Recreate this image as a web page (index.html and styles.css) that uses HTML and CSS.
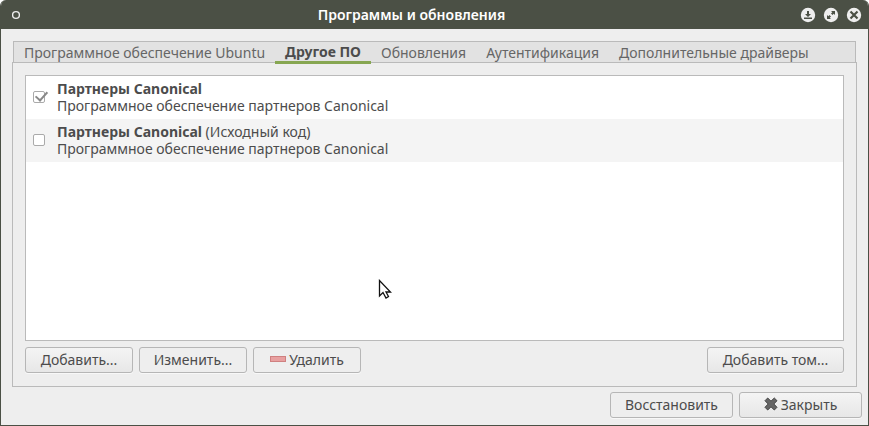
FILE: index.html
```html
<!DOCTYPE html>
<html lang="ru">
<head>
    <meta charset="UTF-8">
    <meta name="viewport" content="width=device-width, initial-scale=1.0">
    <title>Программы и обновления</title>
    <link rel="stylesheet" href="styles.css">
</head>
<body>
    <div class="window">
        <header class="titlebar">
            <button class="window-button" aria-label="Меню окна">
                <svg width="16" height="16" viewBox="0 0 16 16"><circle cx="9" cy="8" r="3.4" fill="none" stroke="#eeeeee" stroke-width="1.4"/></svg>
            </button>
            <h1>Программы и обновления</h1>
            <div class="window-controls">
                <button class="window-button" aria-label="Свернуть">
                    <svg width="16" height="16" viewBox="0 0 16 16">
                        <circle cx="8" cy="8" r="7.2" fill="#eeeeee"/>
                        <path d="M7 4h2v3h2L8 10 5 7h2zM4 10.5h8V12H4z" fill="#4b5045"/>
                    </svg>
                </button>
                <button class="window-button" aria-label="Развернуть">
                    <svg width="16" height="16" viewBox="0 0 16 16">
                        <circle cx="8" cy="8" r="7.2" fill="#eeeeee"/>
                        <path d="M8 4h4v4l-1.3-1.3L9.5 8 8 6.5l1.3-1.2zM4 8l1.3 1.3L6.5 8 8 9.5l-1.3 1.2L8 12H4z" fill="#4b5045"/>
                    </svg>
                </button>
                <button class="window-button" aria-label="Закрыть окно">
                    <svg width="16" height="16" viewBox="0 0 16 16">
                        <circle cx="8" cy="8" r="7.2" fill="#eeeeee"/>
                        <path d="M4.5 4.5l7 7M11.5 4.5l-7 7" stroke="#4b5045" stroke-width="2.2"/>
                    </svg>
                </button>
            </div>
        </header>

        <main class="content">
            <div class="tabs" role="tablist">
                <button class="tab" role="tab">Программное обеспечение Ubuntu</button>
                <button class="tab active" role="tab" aria-selected="true">Другое ПО</button>
                <button class="tab" role="tab">Обновления</button>
                <button class="tab" role="tab">Аутентификация</button>
                <button class="tab" role="tab">Дополнительные драйверы</button>
            </div>

            <section class="panel">
                <ul class="sources">
                    <li>
                        <label class="source">
                            <input type="checkbox" checked>
                            <span><b>Партнеры Canonical</b><br>Программное обеспечение партнеров Canonical</span>
                        </label>
                    </li>
                    <li>
                        <label class="source">
                            <input type="checkbox">
                            <span><b>Партнеры Canonical</b> (Исходный код)<br>Программное обеспечение партнеров Canonical</span>
                        </label>
                    </li>
                </ul>
                <div class="buttons">
                    <button class="btn">Добавить...</button>
                    <button class="btn flat">Изменить...</button>
                    <button class="btn flat">
                        <svg width="16" height="6" viewBox="0 0 16 6"><rect x="0.5" y="0.5" width="15" height="5" fill="#e8a0a0" stroke="#cf8080"/></svg>
                        Удалить
                    </button>
                    <button class="btn btn-volume">Добавить том...</button>
                </div>
            </section>
        </main>

        <footer class="footer">
            <button class="btn wide flat">Восстановить</button>
            <button class="btn wide">
                <svg width="14" height="14" viewBox="0 0 14 14"><path d="M3.7 1L7 4.2 10.3 1 13 3.7 9.8 7l3.2 3.3-2.7 2.7L7 9.8 3.7 13 1 10.3 4.2 7 1 3.7z" fill="#666666" stroke="#444444" stroke-linejoin="round"/></svg>
                Закрыть
            </button>
        </footer>

        <svg class="cursor" width="14" height="21" viewBox="0 0 14 21">
            <path d="M1.5 1.5v15.5l3.5-3.5 3 5.5 2.5-1.5-2.5-4.500h4.500z" fill="#ffffff" stroke="#111111" stroke-width="1.3"/>
        </svg>
    </div>
</body>
</html>
```

FILE: styles.css
```css
* {
    box-sizing: border-box;
}
body {
    margin: 0;
    background: #fff;
    color: #4c4c4c;
    font-family: "Noto Sans", "Open Sans", sans-serif;
    font-size: 14px;
    line-height: 17px;
}
button {
    font: inherit;
    color: inherit;
    margin: 0;
    white-space: nowrap;
}
.window {
    position: relative;
    display: flex;
    flex-direction: column;
    min-height: 100vh;
    background: #eee;
    border: 1px solid #4b5045;
    border-top: none;
    border-radius: 6px 6px 0 0;
    overflow: hidden;
}
.titlebar {
    display: flex;
    align-items: center;
    height: 29px;
    padding: 0 6px;
    background: #4b5045;
    color: #fff;
}
.titlebar h1 {
    flex: 1;
    margin: 0;
    font-size: 14px;
    font-weight: 600;
    text-align: center;
}
.window-controls {
    display: flex;
    gap: 7px;
}
.window-button {
    width: 16px;
    height: 16px;
    padding: 0;
    border: none;
    background: none;
}
.window-button svg {
    display: block;
}
.content {
    flex: 1;
    display: flex;
    flex-direction: column;
    padding: 12px 11px 0;
}
.tabs {
    display: flex;
    height: 21px;
    margin: 0 1px;
    border: 1px solid #bababa;
    border-bottom: none;
    background: #e2e2e2;
}
.tab {
    padding: 0 10px;
    border: none;
    background: none;
    color: #666;
}
.tab.active {
    position: relative;
    height: 22px;
    border-bottom: 3px solid #87a752;
    color: #4c4c4c;
    font-weight: bold;
}
.panel {
    flex: 1;
    display: flex;
    flex-direction: column;
    padding: 12px 12px 13px;
    border: 1px solid #bababa;
}
.sources {
    flex: 1;
    margin: 0;
    padding: 0;
    list-style: none;
    background: #fff;
    border: 1px solid #bababa;
}
.source {
    display: flex;
    align-items: center;
    gap: 12px;
    height: 43px;
    padding: 0 7px 2px;
}
.sources li:nth-child(even) {
    background: #f4f4f4;
}
.source input {
    appearance: none;
    width: 12px;
    height: 12px;
    margin: 0;
    border: 1px solid #aaa;
    border-radius: 2px;
    background: #fff;
}
.source input:checked {
    position: relative;
}
.source input:checked::after {
    content: "";
    position: absolute;
    left: 4px;
    top: -3px;
    width: 5px;
    height: 10px;
    border: solid #888;
    border-width: 0 2px 2px 0;
    transform: rotate(42deg);
}
.buttons {
    display: flex;
    gap: 6px;
    margin-top: 6px;
}
.btn {
    display: flex;
    align-items: center;
    justify-content: center;
    gap: 3px;
    min-width: 108px;
    height: 26px;
    padding: 0 8px 2px;
    border: 1px solid #b6b6b6;
    border-radius: 3px;
    background: linear-gradient(#f4f4f4, #e7e7e7);
    box-shadow: 0 1px #f8f8f8;
}
.btn.flat {
    background: #eee;
}
.btn.wide {
    min-width: 123px;
}
.btn-volume {
    min-width: 137px;
    margin-left: auto;
}
.footer {
    display: flex;
    justify-content: flex-end;
    gap: 6px;
    padding: 5px 6px 7px;
}
.cursor {
    position: absolute;
    left: 377px;
    top: 279px;
}
```
